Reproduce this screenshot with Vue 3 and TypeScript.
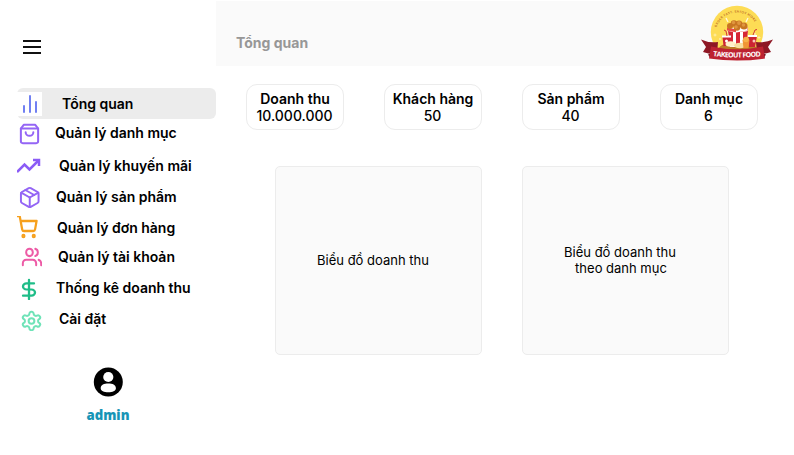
<script setup lang="ts">
interface MenuItem {
  key: string
  label: string
  paths: string[]
  active?: boolean
}

interface Stat {
  label: string
  value: string
}

const menu: MenuItem[] = [
  { key: 'overview', label: 'Tổng quan', active: true, paths: ['M6 20v-6', 'M12 20V4', 'M18 20V10'] },
  {
    key: 'category',
    label: 'Quản lý danh mục',
    paths: ['M6 2 3 6v14a2 2 0 0 0 2 2h14a2 2 0 0 0 2-2V6l-3-4z', 'M3 6h18', 'M16 10a4 4 0 0 1-8 0'],
  },
  { key: 'promotion', label: 'Quản lý khuyến mãi', paths: ['M23 6l-9.5 9.5-5-5L1 18', 'M17 6h6v6'] },
  {
    key: 'product',
    label: 'Quản lý sản phẩm',
    paths: [
      'M16.5 9.4l-9-5.19',
      'M21 16V8a2 2 0 0 0-1-1.73l-7-4a2 2 0 0 0-2 0l-7 4A2 2 0 0 0 3 8v8a2 2 0 0 0 1 1.73l7 4a2 2 0 0 0 2 0l7-4A2 2 0 0 0 21 16z',
      'M3.27 6.96L12 12.01l8.73-5.05',
      'M12 22.08V12',
    ],
  },
  {
    key: 'order',
    label: 'Quản lý đơn hàng',
    paths: [
      'M1 1h4l2.68 13.39a2 2 0 0 0 2 1.61h9.72a2 2 0 0 0 2-1.61L23 6H6',
      'M8 21a1 1 0 1 0 2 0a1 1 0 1 0-2 0z',
      'M19 21a1 1 0 1 0 2 0a1 1 0 1 0-2 0z',
    ],
  },
  {
    key: 'account',
    label: 'Quản lý tài khoản',
    paths: [
      'M17 21v-2a4 4 0 0 0-4-4H5a4 4 0 0 0-4 4v2',
      'M5 7a4 4 0 1 0 8 0a4 4 0 1 0-8 0z',
      'M23 21v-2a4 4 0 0 0-3-3.87',
      'M16 3.13a4 4 0 0 1 0 7.75',
    ],
  },
  {
    key: 'revenue',
    label: 'Thống kê doanh thu',
    paths: ['M12 1v22', 'M17 5H9.5a3.5 3.5 0 0 0 0 7h5a3.5 3.5 0 0 1 0 7H6'],
  },
  {
    key: 'settings',
    label: 'Cài đặt',
    paths: [
      'M12.22 2h-.44a2 2 0 0 0-2 2v.18a2 2 0 0 1-1 1.73l-.43.25a2 2 0 0 1-2 0l-.15-.08a2 2 0 0 0-2.73.73l-.22.38a2 2 0 0 0 .73 2.73l.15.1a2 2 0 0 1 1 1.72v.51a2 2 0 0 1-1 1.74l-.15.09a2 2 0 0 0-.73 2.73l.22.38a2 2 0 0 0 2.73.73l.15-.08a2 2 0 0 1 2 0l.43.25a2 2 0 0 1 1 1.73V20a2 2 0 0 0 2 2h.44a2 2 0 0 0 2-2v-.18a2 2 0 0 1 1-1.73l.43-.25a2 2 0 0 1 2 0l.15.08a2 2 0 0 0 2.73-.73l.22-.39a2 2 0 0 0-.73-2.73l-.15-.08a2 2 0 0 1-1-1.74v-.5a2 2 0 0 1 1-1.74l.15-.09a2 2 0 0 0 .73-2.73l-.22-.38a2 2 0 0 0-2.73-.73l-.15.08a2 2 0 0 1-2 0l-.43-.25a2 2 0 0 1-1-1.73V4a2 2 0 0 0-2-2z',
      'M9 12a3 3 0 1 0 6 0a3 3 0 1 0-6 0z',
    ],
  },
]

const stats: Stat[] = [
  { label: 'Doanh thu', value: '10.000.000' },
  { label: 'Khách hàng', value: '50' },
  { label: 'Sản phẩm', value: '40' },
  { label: 'Danh mục', value: '6' },
]
</script>

<template>
  <div class="page">
    <aside class="sidebar">
      <button class="toggle" type="button">
        <svg viewBox="0 0 20 16" width="20" height="16"><path d="M1 2h18M1 8h18M1 14h18" /></svg>
      </button>

      <nav class="menu">
        <a v-for="item in menu" :key="item.key" :class="['item', item.key, { active: item.active }]">
          <span class="icon">
            <svg viewBox="0 0 24 24" preserveAspectRatio="none">
              <path v-for="d in item.paths" :key="d" :d="d" />
            </svg>
          </span>
          <span class="label">{{ item.label }}</span>
        </a>
      </nav>

      <div class="user">
        <svg viewBox="0 0 30 30" width="30" height="30">
          <circle cx="15.3" cy="15" r="14.5" fill="#000" />
          <circle cx="15.3" cy="10" r="5.1" fill="#fff" />
          <path d="M7.700 21.200c0-3.400 3.400-4.600 7.600-4.600s7.600 1.200 7.600 4.600c0 2.600-3.400 4-7.600 4s-7.600-1.400-7.600-4z" fill="#fff" />
        </svg>
        <span class="username">admin</span>
      </div>
    </aside>

    <main class="main">
      <header class="header">
        <h1 class="title">Tổng quan</h1>
        <svg class="logo" viewBox="0 0 74 56" width="74" height="56">
          <defs>
            <path id="motto-arc" d="M16.500 22.500A21.500 21.500 0 0 1 57.500 22.500" />
            <path id="name-arc" d="M12 51Q37 54 63 51" />
          </defs>
          <circle cx="37" cy="27" r="26.200" fill="#fddc55" />
          <text class="motto"><textPath href="#motto-arc" textLength="48">ORDER FAST, ENJOY MORE</textPath></text>
          <path d="M26 13l2 4M48 13l-2 4" stroke="#fff8df" stroke-width="1.300" />
          <path d="M15 28.500v3M13.500 30h3M20 33v2M19 34h2M55 28v2M54 29h2M59 31v3M57.500 32.500h3" stroke="#fff5c5" stroke-width=".7" />
          <path d="M19 43q2-4 9-4h19q8 0 10 5l-2 4H20z" fill="#bd7b26" />
          <path d="M27 23h21l-2 19H30z" fill="#fff" />
          <path d="M28 26l5 1v14h-3zM36 27h4v14h-4zM43 27l5-1-2 15h-3z" fill="#d62635" />
          <path d="M27 22.500l10 2 11-2v3l-11 2-10-2z" fill="#e94a48" />
          <path d="M36 24.500l11.500-2v3l-11.500 2z" fill="#fff" />
          <g fill="#c87522">
            <circle cx="30" cy="21" r="3" /><circle cx="34" cy="18.500" r="3.300" />
            <circle cx="39" cy="19" r="3.500" /><circle cx="44" cy="21" r="3.500" />
            <circle cx="37" cy="22.500" r="3.200" />
          </g>
          <g fill="#df963f">
            <circle cx="33.500" cy="17.500" r="1.700" /><circle cx="39" cy="18" r="1.900" />
            <circle cx="43.500" cy="20" r="1.700" /><circle cx="36" cy="22" r="1.800" />
          </g>
          <path d="M22.500 32h8l-1 9h-6zM48 31h9l-2 11h-6z" fill="#cc2433" />
          <path d="M22 30.500h9v2h-9zM48 30h9v2h-9z" fill="#fff" />
          <path d="M27 31l-1-5-2-1M53 30l2-5 2-.5" fill="none" stroke="#d23a38" />
          <circle cx="26.500" cy="36" r="1.500" fill="#fff" /><circle cx="54" cy="36" r="1.500" fill="#f7c7b8" />
          <ellipse cx="30.500" cy="39" rx="5" ry="2.800" fill="#fff0ca" />
          <ellipse cx="40" cy="40.500" rx="6" ry="2.800" fill="#f8dfa0" />
          <path d="M42.500 35q3.500-5 7 0l-1 8h-5z" fill="#f09535" />
          <circle cx="46" cy="34.500" r="2.800" fill="#f7b34a" />
          <path d="M1 34.500q7 3.500 17 2.500l-1 12q-8 .5-14-2l3-5zM73 34.500q-7 3.500-17 2.500l1 12q8 .5 14-2l-3-5z" fill="#8e1724" />
          <path d="M12 48l-4 1.500 2 3zM62 48l4 1.500-2 3z" fill="#650d18" />
          <path d="M11 41.500q26 5.500 52 0l2 12q-28 4-56 0z" fill="#bd2231" />
          <text class="brand"><textPath href="#name-arc" startOffset="1" textLength="48" lengthAdjust="spacing">TAKEOUT FOOD</textPath></text>
        </svg>
      </header>

      <section class="stats">
        <div v-for="stat in stats" :key="stat.label" class="stat">
          <span class="stat-label">{{ stat.label }}</span>
          <span class="stat-value">{{ stat.value }}</span>
        </div>
      </section>

      <section class="charts">
        <div class="chart"><p>Biểu đồ doanh thu</p></div>
        <div class="chart"><p>Biểu đồ doanh thu<br /><span class="second-line">theo danh mục</span></p></div>
      </section>
    </main>
  </div>
</template>

<style>
body {
  background: #fff;
}
</style>

<style scoped>
.page {
  display: flex;
  width: 794px;
  height: 455px;
  overflow: hidden;
  font-family: Inter, sans-serif;
  font-size: 14px;
  color: #000;
}

.sidebar {
  display: flex;
  flex-direction: column;
  width: 216px;
  flex: none;
}

.toggle {
  display: flex;
  margin: 39px 0 33px 22px;
  padding: 0;
  width: 20px;
  border: 0;
  background: none;
}

.toggle path {
  stroke: #111;
  stroke-width: 2;
}

.menu {
  display: flex;
  flex-direction: column;
  padding-left: 17px;
}

.item {
  display: flex;
  align-items: center;
  height: 24px;
  margin-top: 7px;
}

.icon {
  width: 25px;
  height: 24px;
  overflow: hidden;
  flex: none;
}

.icon svg {
  display: block;
  width: 24px;
  height: 24px;
  margin-left: 1px;
  overflow: visible;
  fill: none;
  stroke: currentColor;
  stroke-width: 2;
  stroke-linecap: round;
  stroke-linejoin: round;
}

.label {
  margin-left: 14px;
  padding-bottom: 2px;
  font-weight: 600;
  line-height: 17px;
  letter-spacing: -0.01px;
  white-space: nowrap;
}

.item.active {
  height: 31px;
  margin-top: 0;
  border-radius: 6px;
  background: #ececec;
}

.active .icon {
  background: #fff;
}

.overview .icon { color: #7180f2; }
.overview .label { margin-left: 20px; padding-bottom: 0; }

.item.category { margin-top: 2px; }
.category .icon { color: #9465f5; }
.category svg { width: 23px; height: 22px; margin: 2px 0 0 1px; stroke-width: 2.1; }
.category .label { margin-left: 13px; }

.item.promotion { margin-top: 9px; }
.promotion .icon { color: #8b5cf6; }
.promotion svg { margin-left: -1px; stroke-width: 2.5; stroke-linecap: butt; stroke-linejoin: miter; }
.promotion .label { margin-left: 17px; }

.product svg { width: 23.5px; height: 23px; margin-top: 1px; }
.product .icon { color: #9465f5; }

.order .icon { color: #f6a01d; }
.order svg { width: 22.5px; margin: -1px 0 0 -2px; stroke-width: 2.4; }
.order .label { margin-left: 15px; }

.item.account { margin-top: 5px; }
.account .icon { color: #ed5ba6; }
.account svg { width: 20px; height: 22px; margin: 1px 0 0 4.5px; stroke-width: 2.4; }
.account .label { margin-left: 16px; }

.revenue .icon { color: #1fbd88; }
.revenue svg { width: 24px; height: 21px; margin: 2.5px 0 0 0; stroke-width: 2.3; }

.settings .icon { color: #6fe3b8; }
.settings svg { width: 23px; height: 22px; margin: 3px 0 0 3px; stroke-width: 2.1; }
.settings .label { margin-left: 17px; }

.user {
  display: flex;
  flex-direction: column;
  align-items: center;
  margin-top: 36px;
}

.username {
  margin-top: 9px;
  font-family: "Open Sans", sans-serif;
  font-size: 13.2px;
  font-weight: 800;
  line-height: 19px;
  color: #1795b6;
}

.main {
  flex: 1;
}

.header {
  display: flex;
  justify-content: space-between;
  height: 65px;
  margin-top: 1px;
  padding: 0 20px;
  box-sizing: border-box;
  background: #fafafa;
}

.title {
  margin: 33px 0 0;
  font-size: 14px;
  font-weight: 700;
  line-height: 17px;
  color: #979797;
}

.logo {
  margin-top: 4px;
}

.motto {
  font: 700 3px Lato, sans-serif;
  fill: #b85c20;
}

.brand {
  font: 700 7px "Open Sans", sans-serif;
  fill: #fff;
}

.stats {
  display: flex;
  gap: 40px;
  padding: 18px 0 0 30px;
}

.stat {
  display: flex;
  flex-direction: column;
  align-items: center;
  justify-content: center;
  box-sizing: border-box;
  width: 98px;
  height: 46px;
  border: 1px solid #ececec;
  border-radius: 11px;
  line-height: 17px;
  white-space: nowrap;
}

.stat-label {
  font-weight: 600;
}

.stat-value {
  padding-right: 1px;
  font-weight: 500;
}

.charts {
  display: flex;
  gap: 40px;
  padding: 36px 0 0 59px;
}

.chart {
  display: flex;
  align-items: center;
  justify-content: center;
  box-sizing: border-box;
  width: 207px;
  height: 189px;
  padding: 0 11px 2px 0;
  border: 1px solid #ececec;
  border-radius: 5px;
  background: #fafafa;
}

.chart p {
  margin: 0;
  font-size: 13px;
  line-height: 16px;
  text-align: center;
}

.second-line {
  padding-left: 2px;
}
</style>
